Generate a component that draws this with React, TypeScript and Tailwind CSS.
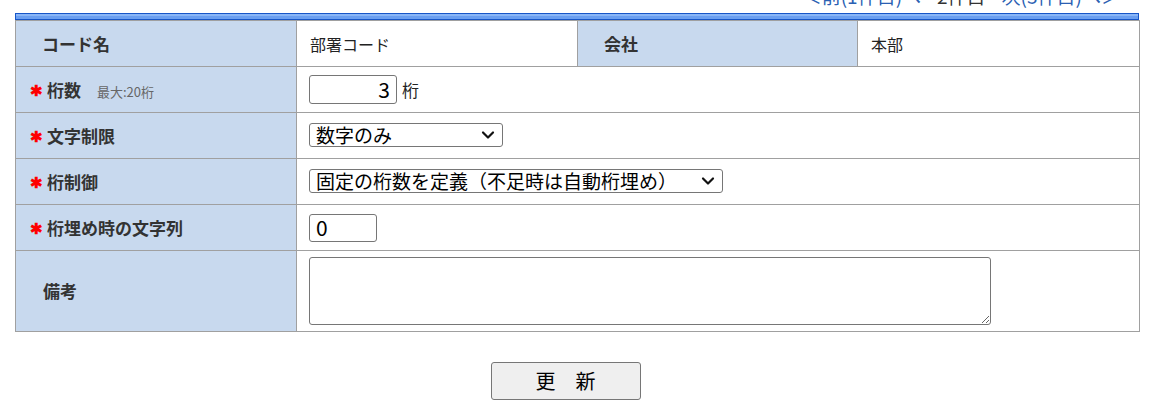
import React from 'react';

const labelCell = 'border border-[#a0a0a0] bg-[#c8d9ee] text-[17px] font-bold text-[#333]';
const valueCell = 'border border-[#a0a0a0] bg-white text-[16px] text-[#222]';

function Req() {
  return (
    <span className="mr-[7px] inline-block w-[10px] -translate-y-[3px] align-middle text-[15px] leading-none text-[#ff0000]">
      ✱
    </span>
  );
}

function Chevron() {
  return (
    <svg
      className="pointer-events-none absolute right-[8px] top-1/2 h-[10px] w-[14px] -translate-y-1/2"
      viewBox="0 0 14 10"
      fill="none"
    >
      <path d="M2 2.5 L7 7.5 L12 2.5" stroke="#111" strokeWidth="2.2" strokeLinecap="round" strokeLinejoin="round" />
    </svg>
  );
}

function Select({ width, text }: { width: string; text: string }) {
  return (
    <div className={`relative inline-block ${width}`}>
      <select className="block h-[24px] w-full appearance-none rounded-[3px] border border-[#767676] bg-white py-0 pl-[6px] pr-[24px] text-[19px] leading-[22px] text-black">
        <option>{text}</option>
      </select>
      <Chevron />
    </div>
  );
}

export default function App() {
  return (
    <div
      className="h-[414px] w-[1151px] overflow-hidden bg-white"
      style={{ fontFamily: '"Noto Sans CJK JP", "Noto Sans", sans-serif' }}
    >
      <div className="h-[13px] overflow-hidden">
        <div className="mt-[-16px] flex justify-end pr-[31px] text-[19px] leading-[24px]">
          <span className="text-[#2b5fb3]">＜前(1件目)へ</span>
          <span className="ml-[16px] text-[#333]">2件目</span>
          <span className="ml-[16px] text-[#2b5fb3]">次(3件目)へ＞</span>
        </div>
      </div>

      <div className="mx-[15px] w-[1124px]">
        <div className="h-[7px] border border-[#1756c8] bg-[#6b9ff0] shadow-[inset_0_2px_0_#8ab6f7]" />
        <table className="w-full table-fixed border-collapse">
          <colgroup>
            <col className="w-[281px]" />
            <col className="w-[281px]" />
            <col className="w-[280px]" />
            <col className="w-[282px]" />
          </colgroup>
          <tbody>
            <tr className="h-[46px]">
              <td className={`${labelCell} pl-[26px]`}>コード名</td>
              <td className={`${valueCell} pl-[13px]`}>部署コード</td>
              <td className={`${labelCell} pl-[26px]`}>会社</td>
              <td className={`${valueCell} pl-[13px]`}>本部</td>
            </tr>
            <tr className="h-[46px]">
              <td className={`${labelCell} pl-[14px]`}>
                <Req />
                桁数
                <span className="ml-[16px] text-[13px] font-normal text-[#666]">最大:20桁</span>
              </td>
              <td colSpan={3} className={`${valueCell} pl-[12px]`}>
                <div className="flex items-center">
                  <input
                    readOnly
                    value="3"
                    className="h-[29px] w-[88px] rounded-[3px] border border-[#767676] px-[6px] text-right text-[21px] text-black"
                  />
                  <span className="ml-[5px] text-[17px]">桁</span>
                </div>
              </td>
            </tr>
            <tr className="h-[46px]">
              <td className={`${labelCell} pl-[14px]`}>
                <Req />
                文字制限
              </td>
              <td colSpan={3} className={`${valueCell} pl-[12px]`}>
                <Select width="w-[194px]" text="数字のみ" />
              </td>
            </tr>
            <tr className="h-[46px]">
              <td className={`${labelCell} pl-[14px]`}>
                <Req />
                桁制御
              </td>
              <td colSpan={3} className={`${valueCell} pl-[12px]`}>
                <Select width="w-[414px]" text="固定の桁数を定義（不足時は自動桁埋め）" />
              </td>
            </tr>
            <tr className="h-[46px]">
              <td className={`${labelCell} pl-[14px]`}>
                <Req />
                桁埋め時の文字列
              </td>
              <td colSpan={3} className={`${valueCell} pl-[12px]`}>
                <input
                  readOnly
                  value="0"
                  className="h-[28px] w-[68px] rounded-[3px] border border-[#767676] px-[6px] text-[21px] text-black"
                />
              </td>
            </tr>
            <tr className="h-[81px]">
              <td className={`${labelCell} pl-[27px]`}>備考</td>
              <td colSpan={3} className={`${valueCell} pl-[12px]`}>
                <textarea className="block h-[68px] w-[682px] rounded-[3px] border border-[#767676] bg-white" />
              </td>
            </tr>
          </tbody>
        </table>
      </div>

      <div className="mt-[30px] flex justify-center pr-[20px]">
        <button className="h-[38px] w-[150px] rounded-[3px] border border-[#767676] bg-[#efefef] text-[20px] text-black">
          更　新
        </button>
      </div>
    </div>
  );
}
